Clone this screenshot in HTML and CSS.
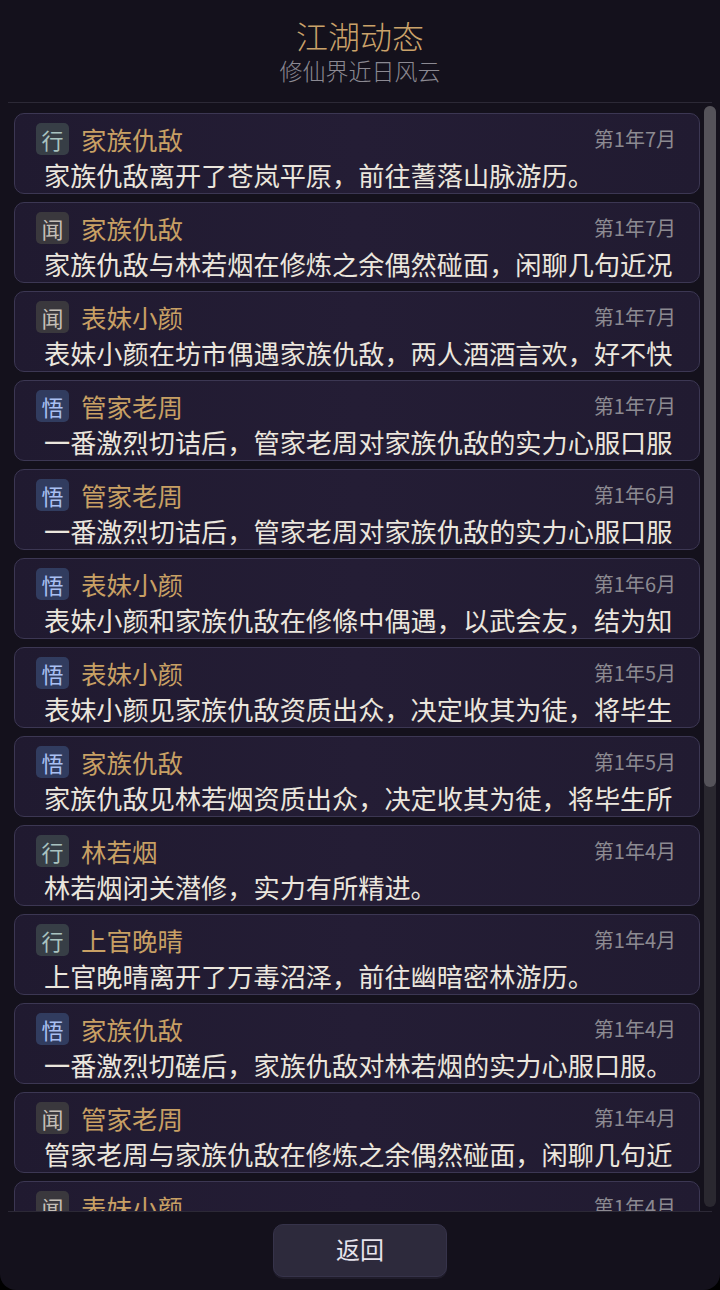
FILE: index.html
```html
<!DOCTYPE html>
<html lang="zh-CN">
<head>
<meta charset="utf-8">
<title>江湖动态</title>
<link rel="stylesheet" href="styles.css">
</head>
<body>
<div class="app">
  <header class="header">
    <h1 class="title">江湖动态</h1>
    <p class="subtitle">修仙界近日风云</p>
  </header>
  <main class="main">
    <div class="list">
      <div class="card"><div class="row"><span class="badge xing">行</span><span class="name">家族仇敌</span><span class="time">第1年7月</span></div><p class="text">家族仇敌离开了苍岚平原，前往蓍落山脉游历。</p></div>
      <div class="card"><div class="row"><span class="badge wen">闻</span><span class="name">家族仇敌</span><span class="time">第1年7月</span></div><p class="text">家族仇敌与林若烟在修炼之余偶然碰面，闲聊几句近况</p></div>
      <div class="card"><div class="row"><span class="badge wen">闻</span><span class="name">表妹小颜</span><span class="time">第1年7月</span></div><p class="text">表妹小颜在坊市偶遇家族仇敌，两人酒酒言欢，好不快</p></div>
      <div class="card"><div class="row"><span class="badge wu">悟</span><span class="name">管家老周</span><span class="time">第1年7月</span></div><p class="text">一番激烈切诘后，管家老周对家族仇敌的实力心服口服</p></div>
      <div class="card"><div class="row"><span class="badge wu">悟</span><span class="name">管家老周</span><span class="time">第1年6月</span></div><p class="text">一番激烈切诘后，管家老周对家族仇敌的实力心服口服</p></div>
      <div class="card"><div class="row"><span class="badge wu">悟</span><span class="name">表妹小颜</span><span class="time">第1年6月</span></div><p class="text">表妹小颜和家族仇敌在修條中偶遇，以武会友，结为知</p></div>
      <div class="card"><div class="row"><span class="badge wu">悟</span><span class="name">表妹小颜</span><span class="time">第1年5月</span></div><p class="text">表妹小颜见家族仇敌资质出众，决定收其为徒，将毕生</p></div>
      <div class="card"><div class="row"><span class="badge wu">悟</span><span class="name">家族仇敌</span><span class="time">第1年5月</span></div><p class="text">家族仇敌见林若烟资质出众，决定收其为徒，将毕生所</p></div>
      <div class="card"><div class="row"><span class="badge xing">行</span><span class="name">林若烟</span><span class="time">第1年4月</span></div><p class="text">林若烟闭关潜修，实力有所精进。</p></div>
      <div class="card"><div class="row"><span class="badge xing">行</span><span class="name">上官晚晴</span><span class="time">第1年4月</span></div><p class="text">上官晚晴离开了万毒沼泽，前往幽暗密林游历。</p></div>
      <div class="card"><div class="row"><span class="badge wu">悟</span><span class="name">家族仇敌</span><span class="time">第1年4月</span></div><p class="text">一番激烈切磋后，家族仇敌对林若烟的实力心服口服。</p></div>
      <div class="card"><div class="row"><span class="badge wen">闻</span><span class="name">管家老周</span><span class="time">第1年4月</span></div><p class="text">管家老周与家族仇敌在修炼之余偶然碰面，闲聊几句近</p></div>
      <div class="card"><div class="row"><span class="badge wen">闻</span><span class="name">表妹小颜</span><span class="time">第1年4月</span></div></div>
    </div>
    <div class="scrollbar"><div class="track"><div class="thumb"></div></div></div>
  </main>
  <footer class="footer">
    <button class="back">返回</button>
  </footer>
</div>
</body>
</html>
```

FILE: styles.css
```css
* { box-sizing: border-box; }
html { background: #000; }
body {
  margin: 0;
  font-family: "Noto Sans CJK SC", "Noto Sans", sans-serif;
}
.app {
  height: 1290px;
  display: flex;
  flex-direction: column;
  background: #14111c;
  border-radius: 0 0 16px 16px;
  overflow: hidden;
}
.header {
  padding: 16px 0 16px;
  margin: 0 8px;
  border-bottom: 1px solid #2c2936;
  text-align: center;
}
.title {
  margin: 0;
  font-size: 32px;
  line-height: 38px;
  font-weight: 300;
  color: #caa26a;
}
.subtitle {
  margin: 0;
  font-size: 23px;
  line-height: 32px;
  font-weight: 300;
  color: #8b8992;
}
.main {
  flex: 1;
  min-height: 0;
  display: flex;
  padding: 0 4px 0 14px;
  gap: 4px;
}
.list {
  flex: 1;
  min-width: 0;
  overflow: hidden;
  padding-top: 10px;
  display: flex;
  flex-direction: column;
  gap: 8px;
}
.card {
  flex: none;
  height: 81px;
  border: 1px solid #3c3753;
  border-radius: 10px;
  background: linear-gradient(90deg, #201a30 0%, #241d35 50%, #211b31 100%);
  padding: 9px 23px 0 21px;
}
.row {
  display: flex;
  align-items: center;
  height: 32px;
}
.badge {
  width: 33px;
  height: 32px;
  border-radius: 5px;
  display: flex;
  align-items: center;
  justify-content: center;
  font-size: 22px;
  line-height: 1;
}
.badge.xing { background: #373e46; color: #a9c3c0; }
.badge.wen { background: #3a383d; color: #c5bfb7; }
.badge.wu { background: #313c5f; color: #a9c0f2; }
.name {
  margin-left: 12px;
  font-size: 25.5px;
  line-height: 32px;
  color: #c8a064;
}
.time {
  margin-left: auto;
  font-size: 20px;
  line-height: 32px;
  color: #8c8a91;
}
.text {
  margin: 5px 0 0;
  padding-left: 8px;
  font-size: 26.2px;
  line-height: 30px;
  white-space: nowrap;
  color: #ebe6dd;
}
.scrollbar {
  width: 12px;
  flex: none;
  display: flex;
  flex-direction: column;
  padding: 3px 0 4px;
}
.track {
  flex: 1;
  background: #2a2830;
  border-radius: 6px;
}
.thumb {
  height: 681px;
  background: #55535a;
  border-radius: 6px;
}
.footer {
  margin: 0 8px;
  border-top: 1px solid #2c2936;
  padding: 12px 0 13px;
  display: flex;
  justify-content: center;
}
.back {
  width: 174px;
  height: 53px;
  border: 1px solid #36334a;
  border-radius: 10px;
  background: #2d2a3c;
  box-shadow: 0 2px 0 #1f1c2a;
  color: #e7e4ec;
  font-family: "Noto Sans CJK SC", sans-serif;
  font-size: 24px;
  line-height: 1;
  padding: 0 0 3px;
}
```
